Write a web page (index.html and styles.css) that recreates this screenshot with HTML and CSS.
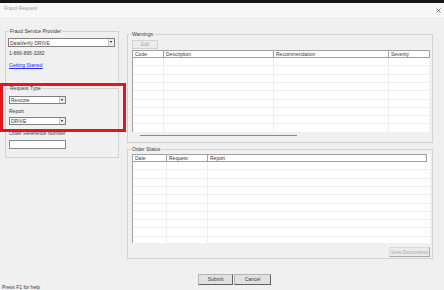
FILE: index.html
```html
<!doctype html>
<html lang="en">
<head>
    <meta charset="UTF-8">
    <title>Fraud Request</title>
    <link rel="stylesheet" href="styles.css">
</head>
<body>
<div class="topbar"></div>
<div class="titlebar">
    <span class="title">Fraud Request</span>
    <svg class="close" width="5" height="5" viewBox="0 0 5 5">
        <path d="M0.5 0.5L4.5 4.5M4.5 0.5L0.5 4.5" stroke="#555" stroke-width="0.8"/>
    </svg>
</div>

<div class="content">
    <div class="col-left">
        <div class="group provider">
            <span class="group-title">Fraud Service Provider</span>
            <div class="combo wide"><span>DataVerify DRIVE</span><i class="arrow"></i></div>
            <p class="phone">1-866-895-3282</p>
            <a class="link" href="javascript:;">Getting Started</a>
        </div>
        <div class="group request">
            <span class="group-title">Request Type</span>
            <div class="combo"><span>Rescore</span><i class="arrow"></i></div>
            <p class="label">Report</p>
            <div class="combo after-label"><span>DRIVE</span><i class="arrow"></i></div>
            <p class="label ref">Order Reference Number</p>
            <div class="textbox"></div>
        </div>
    </div>

    <div class="col-right">
        <div class="group warnings">
            <span class="group-title">Warnings</span>
            <div class="btn disabled edit">Edit</div>
            <div class="grid warn-grid">
                <div class="grid-head">
                    <span class="c-code">Code</span>
                    <span class="c-desc">Description</span>
                    <span class="c-rec">Recommendation</span>
                    <span class="c-sev">Severity</span>
                </div>
                <div class="grid-body">
                    <span class="c-code"></span>
                    <span class="c-desc"></span>
                    <span class="c-rec"></span>
                    <span class="c-sev"></span>
                </div>
                <div class="hscroll"><i class="thumb"></i></div>
            </div>
        </div>

        <div class="group status">
            <span class="group-title">Order Status</span>
            <div class="grid order-grid">
                <div class="grid-head">
                    <span class="c-date">Date</span>
                    <span class="c-req">Request</span>
                    <span class="c-rep">Report</span>
                </div>
                <div class="grid-body">
                    <span class="c-date"></span>
                    <span class="c-req"></span>
                    <span class="c-rep"></span>
                </div>
            </div>
            <div class="btn disabled docs">View Documents</div>
        </div>
    </div>
</div>

<div class="footer">
    <p class="help">Press F1 for help</p>
    <div class="btn">Submit</div>
    <div class="btn">Cancel</div>
</div>

<div class="highlight"></div>
</body>
</html>
```

FILE: styles.css
```css
* {
    margin: 0;
    padding: 0;
    box-sizing: border-box;
}

body {
    position: relative;
    width: 444px;
    height: 290px;
    overflow: hidden;
    background: #f0f0f0;
    font: 5px/7px "Liberation Sans", Arial, sans-serif;
    color: #383838;
}

.topbar {
    height: 3px;
    background: #161616;
}

.titlebar {
    display: flex;
    justify-content: space-between;
    align-items: flex-start;
    height: 14px;
    padding: 0 3px 0 4px;
    background: #f7f7f7;
}

.titlebar > .title {
    margin-top: 2px;
    line-height: 6px;
    color: #a2a2a2;
}

.titlebar > .close {
    margin-top: 5px;
}

.content {
    display: flex;
    gap: 8px;
    height: 242px;
    padding-left: 5px;
}

.col-left {
    width: 114px;
    padding-top: 14px;
}

.col-right {
    width: 306px;
    padding-top: 17px;
}

.group {
    position: relative;
    border: 1px solid #d2d2d2;
}

.group > .group-title {
    position: absolute;
    top: -4px;
    left: 3px;
    padding: 0 1px;
    background: #f0f0f0;
    line-height: 7px;
}

/* combo boxes */
.combo {
    display: flex;
    align-items: center;
    justify-content: space-between;
    height: 8px;
    padding-left: 1px;
    background: #fff;
    border: 1px solid #808080;
    line-height: 6px;
}

.combo.wide {
    height: 9px;
}

.combo > .arrow {
    position: relative;
    width: 6px;
    height: 100%;
    border-left: 1px solid #c4c4c4;
    background: #ececec;
}

.combo > .arrow::after {
    content: "";
    position: absolute;
    top: 2px;
    left: 1px;
    border-top: 2px solid #111;
    border-left: 1.5px solid transparent;
    border-right: 1.5px solid transparent;
}

.provider {
    height: 55px;
    padding: 6px 3px 0 2px;
}

.provider > .phone {
    margin-top: 3px;
    padding-left: 1px;
}

.provider > .link {
    display: block;
    margin-top: 5px;
    padding-left: 1px;
    color: #2a2aff;
    text-decoration: underline;
}

.request {
    height: 70px;
    margin-top: 2px;
    padding: 7px 3px 0;
}

.request > .combo,
.request > .textbox {
    width: 57px;
}

.request > .label {
    margin-top: 4px;
}

.request > .label.ref {
    margin-top: 5px;
}

.request > .combo.after-label {
    margin-top: 2px;
}

.request > .textbox {
    height: 9px;
    margin-top: 3px;
    background: #fff;
    border: 1px solid #8a8a8a;
}

/* buttons */
.btn {
    display: flex;
    align-items: center;
    justify-content: center;
    height: 11px;
    background: #e1e1e1;
    border: 1px solid;
    border-color: #b4b4b4 #606060 #606060 #b4b4b4;
}

.btn.disabled {
    background: #ececec;
    border-color: #dcdcdc #a8a8a8 #a8a8a8 #dcdcdc;
    color: #a8a8a8;
}

.warnings {
    height: 109px;
    padding: 5px 2px 0 4px;
}

.warnings > .edit {
    width: 26px;
    height: 9px;
    border-color: #d2d2d2;
}

.status {
    display: flex;
    flex-direction: column;
    height: 110px;
    margin-top: 6px;
    padding: 4px 2px 0 4px;
}

.status > .docs {
    align-self: flex-end;
    width: 41px;
    height: 10px;
    margin-top: 4px;
}

/* data grids */
.grid {
    display: flex;
    flex-direction: column;
}

.warn-grid {
    height: 90px;
    margin-top: 1px;
}

.grid-head {
    display: flex;
    height: 8px;
    background: #fff;
    border-left: 1px solid #a0a0a0;
}

.grid-head > span {
    padding-left: 2px;
    border-top: 1px solid #a0a0a0;
    border-bottom: 1px solid #a0a0a0;
    border-right: 1px solid #a0a0a0;
    line-height: 6px;
}

.grid-body {
    display: flex;
    flex: 1;
    border-left: 1px solid #a0a0a0;
    background: #fff repeating-linear-gradient(to bottom, transparent 0 7.3px, #efefef 7.3px 8.3px);
}

.grid-body > span {
    border-right: 1px solid #efefef;
}

.c-code { width: 31px; }
.c-desc { width: 110px; }
.c-rec { width: 115px; }
.c-sev { flex: 1; }

.c-date { width: 34px; }
.c-req { width: 41px; }
.c-rep { flex: 1; }

.order-grid > .grid-head > .c-rep {
    margin-right: 3px;
}

.order-grid > .grid-body > .c-rep {
    border-right: 0;
}

.order-grid {
    height: 89px;
}

.hscroll {
    height: 8px;
    padding: 3px 0 0 8px;
    background: #f0f0f0;
}

.hscroll > .thumb {
    display: block;
    width: 157px;
    border-top: 1px solid #8a8a8a;
}

/* footer */
.footer {
    display: grid;
    grid-template-columns: 197px 35px 37px;
    column-gap: 1px;
    height: 31px;
}

.footer > .btn {
    margin-top: 15px;
}

.footer > .help {
    align-self: end;
    padding-left: 2px;
    line-height: 6px;
}

.highlight {
    position: absolute;
    top: 83px;
    left: 0;
    width: 126px;
    height: 49px;
    border: 3px solid #e3161c;
}
```
